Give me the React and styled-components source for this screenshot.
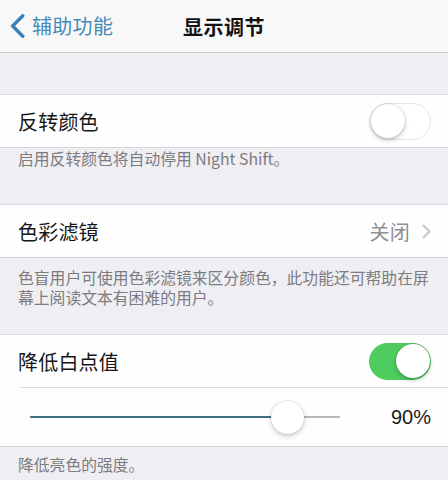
import React from 'react';
import styled, { createGlobalStyle } from 'styled-components';

const GlobalStyle = createGlobalStyle`
  html, body {
    margin: 0;
    padding: 0;
    background: #efeef3;
  }
  body {
    font-family: "Noto Sans CJK SC", "Noto Sans", sans-serif;
    color: #161616;
  }
`;

const Screen = styled.div`
  width: 448px;
  height: 480px;
  overflow: hidden;
  background: #efeef3;
  display: flex;
  flex-direction: column;
`;

const NavBar = styled.header`
  height: 52px;
  flex: none;
  background: #f8f8f9;
  border-bottom: 1px solid #c9c9cc;
  display: grid;
  grid-template-columns: 1fr auto 1fr;
  align-items: center;
`;

const BackButton = styled.div`
  display: flex;
  align-items: center;
  gap: 7px;
  padding-left: 10px;
  color: #4589b6;
  font-size: 20px;
  line-height: 1;
  letter-spacing: 0.3px;
`;

const Title = styled.h1`
  margin: 0;
  font-size: 20px;
  font-weight: 600;
  color: #111;
  letter-spacing: 0.5px;
`;

const Gap = styled.div`
  height: ${p => p.$h}px;
  flex: none;
`;

const Group = styled.section`
  background: #fefefe;
  border-top: 1px solid #dcdbe0;
  border-bottom: 1px solid #d6d5da;
  flex: none;
`;

const Row = styled.div`
  height: ${p => p.$h || 52}px;
  display: flex;
  align-items: center;
  padding: 0 17px 0 18px;
  gap: 12px;
`;

const Label = styled.span`
  flex: 1;
  font-size: 20px;
  letter-spacing: 0.2px;
`;

const Value = styled.span`
  font-size: 20px;
  color: #8f8f94;
  letter-spacing: 0.3px;
`;

const Divider = styled.div`
  height: 1px;
  background: #dddce1;
  margin-left: 20px;
`;

const Footer = styled.p`
  margin: 0;
  padding: ${p => p.$top}px 16px 0 18px;
  height: ${p => p.$h}px;
  box-sizing: border-box;
  flex: none;
  font-size: 15.8px;
  line-height: 20px;
  color: #7b7b80;
`;

const Track = styled.div`
  flex: none;
  width: 62px;
  height: 37px;
  border-radius: 19px;
  box-sizing: border-box;
  background: ${p => (p.$on ? '#4fcc5f' : '#fff')};
  border: ${p => (p.$on ? 'none' : '1.5px solid #e6e6e8')};
  display: flex;
  align-items: center;
  justify-content: ${p => (p.$on ? 'flex-end' : 'flex-start')};
  padding: 1px;
`;

const Knob = styled.div`
  width: 34px;
  height: 34px;
  border-radius: 50%;
  background: #fff;
  box-shadow: 0 2px 4px rgba(0, 0, 0, 0.25), 0 0 0 0.5px rgba(0, 0, 0, 0.12);
`;

const SliderBox = styled.div`
  flex: 1;
  display: flex;
  align-items: center;
  padding-left: 12px;
`;

const SliderTrack = styled.div`
  position: relative;
  width: 310px;
  height: 2px;
  background: #b9b9bd;
  border-radius: 1px;
`;

const SliderFill = styled.div`
  height: 100%;
  background: #3f6d84;
  border-radius: 1px;
`;

const Thumb = styled.div`
  position: absolute;
  top: 50%;
  width: 33px;
  height: 33px;
  margin: -16.5px 0 0 -16.5px;
  border-radius: 50%;
  background: #fff;
  box-shadow: 0 2px 5px rgba(0, 0, 0, 0.22), 0 0 0 0.5px rgba(0, 0, 0, 0.1);
`;

const Percent = styled.span`
  font-family: "Liberation Sans", Arial, sans-serif;
  font-size: 20px;
  color: #1a1a1a;
`;

const Toggle = ({ on }) => (
  <Track $on={on}>
    <Knob />
  </Track>
);

const Slider = ({ value }) => (
  <SliderBox>
    <SliderTrack>
      <SliderFill style={{ width: `${value}%` }} />
      <Thumb style={{ left: `${value}%` }} />
    </SliderTrack>
  </SliderBox>
);

export default function App() {
  return (
    <Screen>
      <GlobalStyle />
      <NavBar>
        <BackButton>
          <svg width="15" height="24" viewBox="0 0 15 24">
            <path d="M12.8 1.8 L2.6 12 L12.8 22.2" fill="none" stroke="#3a80b6" strokeWidth="3.4" strokeLinecap="round" strokeLinejoin="round" />
          </svg>
          辅助功能
        </BackButton>
        <Title>显示调节</Title>
        <div />
      </NavBar>

      <Gap $h={41} />
      <Group>
        <Row>
          <Label>反转颜色</Label>
          <Toggle on={false} />
        </Row>
      </Group>
      <Footer $top={1} $h={56}>启用反转颜色将自动停用 Night Shift。</Footer>

      <Group>
        <Row>
          <Label>色彩滤镜</Label>
          <Value>关闭</Value>
          <svg width="9" height="15" viewBox="0 0 9 15">
            <path d="M1.5 1.5 L7.5 7.5 L1.5 13.5" fill="none" stroke="#c4c4c8" strokeWidth="2" strokeLinecap="round" strokeLinejoin="round" />
          </svg>
        </Row>
      </Group>
      <Footer $top={10} $h={76}>色盲用户可使用色彩滤镜来区分颜色，此功能还可帮助在屏幕上阅读文本有困难的用户。</Footer>

      <Group>
        <Row>
          <Label>降低白点值</Label>
          <Toggle on />
        </Row>
        <Divider />
        <Row $h={58}>
          <Slider value={83} />
          <Percent>90%</Percent>
        </Row>
      </Group>
      <Footer $top={8} $h={40}>降低亮色的强度。</Footer>
    </Screen>
  );
}
